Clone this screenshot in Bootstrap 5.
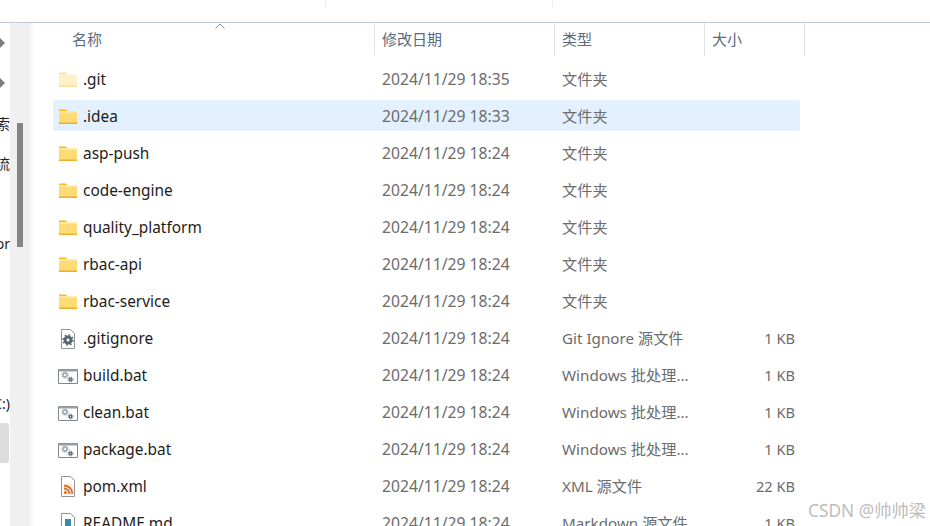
<!DOCTYPE html>
<html lang="zh-CN">
<head>
  <meta charset="UTF-8" />
  <meta name="viewport" content="width=device-width, initial-scale=1" />
  <title>文件资源管理器</title>
  <link href="https://cdn.jsdelivr.net/npm/bootstrap@5.3.3/dist/css/bootstrap.min.css" rel="stylesheet">
  <style>
    html, body { height: 526px; overflow: hidden; }
    body {
      background: #fff;
      font-family: "Noto Sans", "Noto Sans CJK SC", sans-serif;
      font-size: 15.4px;
      color: #1c1c1c;
    }
    .top-band { height: 22px; }
    .top-sep { width: 1px; height: 8px; background: #f0f0f0; }
    .top-sep-a { margin-left: 325px; }
    .top-sep-b { margin-left: 226px; }
    .shell { height: 504px; border-top: 1px solid #bccad9; overflow: hidden; }

    .side-labels { width: 10px; overflow: hidden; flex-shrink: 0; }
    .side-row { height: 40px; font-size: 14px; white-space: nowrap; color: #222; }
    .side-row.hovered { background: #dcdcdc; border-radius: 0 3px 3px 0; width: 9px; }
    .side-arrow { width: 0; height: 0; border-left: 5px solid #7c7c7c; border-top: 5px solid transparent; border-bottom: 5px solid transparent; }
    .side-track { width: 20px; background: #f0f0f0; flex-shrink: 0; padding-top: 100px; }
    .side-thumb { width: 6px; height: 124px; margin-left: 7px; background: #858585; }
    .side-edge { width: 3px; background: #f8f8f8; flex-shrink: 0; }

    .head-row, .file-row { display: grid; }
    .head-row { grid-template-columns: 342px 180px 150px 100px; height: 31px; color: #5a6a80; font-size: 15px; position: relative; }
    .head-cell { padding-left: 7px; border-right: 1px solid #e3e3e3; line-height: 33px; }
    .head-cell:first-child { padding-left: 39px; }
    .sort-caret { position: absolute; left: 181px; top: 0; }

    .file-list { width: 767px; padding: 9px 0 0 20px; display: flex; flex-direction: column; gap: 6px; }
    .file-row { grid-template-columns: 329px 180px 150px 88px; height: 31px; line-height: 32px; flex-shrink: 0; border-radius: 2px; }
    .file-row.picked { background: #e2f1fd; }
    .file-name { display: flex; align-items: center; }
    .file-name span { padding-top: 1px; }
    .file-icon { width: 30px; height: 24px; flex-shrink: 0; }
    .file-date, .file-type, .file-size { color: #6c6c6c; }
    .file-date { font-size: 15.7px; }
    .file-type { font-size: 15.2px; }
    .file-size { text-align: right; padding-right: 5px; font-size: 14.6px; line-height: 33px; }
    .mark-text {
      position: absolute; left: 808px; top: 500px;
      color: #bdbdbd; font-size: 17.3px; line-height: 22px;
      white-space: nowrap;
    }
  </style>
</head>
<body>

<svg width="0" height="0" class="d-block">
  <defs>
    <symbol id="ic-folder" viewBox="0 0 30 24">
      <path d="M6 4.500h7l2 2h-9z" fill="#f9bc1f"/>
      <path d="M6 6.500h18v12.500H6z" fill="#fedb74"/>
      <path d="M6 17.500h18V19H6z" fill="#efae2c"/>
      <path d="M6 6.500h18v1H6z" fill="#fff0b8"/>
    </symbol>
    <symbol id="ic-folder-dim" viewBox="0 0 30 24">
      <path d="M6 4.500h7l2 2h-9z" fill="#fce09a"/>
      <path d="M6 6.500h18v12.500H6z" fill="#fff0c8"/>
      <path d="M6 17.500h18V19H6z" fill="#f8dfa4"/>
    </symbol>
    <symbol id="ic-gear-file" viewBox="0 0 30 24">
      <path d="M8.500 2.500h9l4 4v15h-13z" fill="#fff" stroke="#8d9499"/>
      <circle cx="15" cy="13" r="3" fill="none" stroke="#566570" stroke-width="3"/>
      <circle cx="15" cy="13" r="5" fill="none" stroke="#566570" stroke-width="1.500" stroke-dasharray="1.800 2.100"/>
    </symbol>
    <symbol id="ic-bat" viewBox="0 0 30 24">
      <path d="M5.500 5.500h19v14h-19z" fill="#fff" stroke="#81878c"/>
      <path d="M5.500 6.500h19" stroke="#9aa0a5" stroke-width="2"/>
      <circle cx="12" cy="11" r="2" fill="none" stroke="#a6b0b8" stroke-width="1.800"/>
      <circle cx="12" cy="11" r="3.300" fill="none" stroke="#a6b0b8" stroke-width="1" stroke-dasharray="1.300 1.300"/>
      <circle cx="17.500" cy="15.500" r="1.300" fill="none" stroke="#5f6b74" stroke-width="1.500"/>
      <circle cx="17.500" cy="15.500" r="2.500" fill="none" stroke="#5f6b74" stroke-width="1" stroke-dasharray="1 1"/>
    </symbol>
    <symbol id="ic-xml" viewBox="0 0 30 24">
      <path d="M8.500 1.500h9l4 4v16h-13z" fill="#fff" stroke="#8d9499"/>
      <path d="M10.500 8.500h9v11h-9z" fill="#fbeadd"/>
      <circle cx="12.300" cy="17.500" r="1.500" fill="#d4732f"/>
      <path d="M11 13.500a5.500 5.500 0 0 1 5.500 5.500M11 10.500a8.500 8.500 0 0 1 8.500 8.500" fill="none" stroke="#d4732f" stroke-width="1.800"/>
    </symbol>
    <symbol id="ic-md" viewBox="0 0 30 24">
      <path d="M8.500 1.500h9l4 4v16h-13z" fill="#fff" stroke="#8d9499"/>
      <path d="M12 7h6v7l2 3v5h-10v-5l2-3z" fill="#3f87ad"/>
    </symbol>
  </defs>
</svg>

<div class="top-band d-flex">
  <div class="top-sep top-sep-a"></div>
  <div class="top-sep top-sep-b"></div>
</div>

<div class="shell d-flex">
  <!-- nav pane, cut off on the left -->
  <div class="side-labels">
    <div class="side-row d-flex align-items-center justify-content-start"><span class="side-arrow"></span></div>
    <div class="side-row d-flex align-items-center justify-content-start"><span class="side-arrow"></span></div>
    <div class="side-row d-flex align-items-center justify-content-end">搜索</div>
    <div class="side-row d-flex align-items-center justify-content-end">交流</div>
    <div class="side-row"></div>
    <div class="side-row d-flex align-items-center justify-content-end">or</div>
    <div class="side-row"></div>
    <div class="side-row"></div>
    <div class="side-row"></div>
    <div class="side-row d-flex align-items-center justify-content-end">C:)</div>
    <div class="side-row hovered"></div>
  </div>
  <div class="side-track"><div class="side-thumb"></div></div>
  <div class="side-edge"></div>

  <!-- file pane -->
  <div class="flex-grow-1 overflow-hidden">
    <div class="head-row">
      <div class="head-cell">名称</div>
      <div class="head-cell">修改日期</div>
      <div class="head-cell">类型</div>
      <div class="head-cell">大小</div>
      <svg class="sort-caret" width="12" height="6" viewBox="0 0 12 6"><path d="M1.500 5.500 6 1l4.500 4.500" fill="none" stroke="#8a8a8a"/></svg>
    </div>

    <div class="file-list" id="fileList"></div>
  </div>
</div>

<div class="mark-text">CSDN @帅帅梁</div>

<script src="https://cdn.jsdelivr.net/npm/bootstrap@5.3.3/dist/js/bootstrap.bundle.min.js"></script>
<script>
  const files = [
    ['ic-folder-dim', '.git', '2024/11/29 18:35', '文件夹', ''],
    ['ic-folder', '.idea', '2024/11/29 18:33', '文件夹', ''],
    ['ic-folder', 'asp-push', '2024/11/29 18:24', '文件夹', ''],
    ['ic-folder', 'code-engine', '2024/11/29 18:24', '文件夹', ''],
    ['ic-folder', 'quality_platform', '2024/11/29 18:24', '文件夹', ''],
    ['ic-folder', 'rbac-api', '2024/11/29 18:24', '文件夹', ''],
    ['ic-folder', 'rbac-service', '2024/11/29 18:24', '文件夹', ''],
    ['ic-gear-file', '.gitignore', '2024/11/29 18:24', 'Git Ignore 源文件', '1 KB'],
    ['ic-bat', 'build.bat', '2024/11/29 18:24', 'Windows 批处理...', '1 KB'],
    ['ic-bat', 'clean.bat', '2024/11/29 18:24', 'Windows 批处理...', '1 KB'],
    ['ic-bat', 'package.bat', '2024/11/29 18:24', 'Windows 批处理...', '1 KB'],
    ['ic-xml', 'pom.xml', '2024/11/29 18:24', 'XML 源文件', '22 KB'],
    ['ic-md', 'README.md', '2024/11/29 18:24', 'Markdown 源文件', '1 KB']
  ];
  document.getElementById('fileList').innerHTML = files.map((f, i) => `
    <div class="file-row${i === 1 ? ' picked' : ''}">
      <div class="file-name"><svg class="file-icon"><use href="#${f[0]}"/></svg><span>${f[1]}</span></div>
      <div class="file-date">${f[2]}</div>
      <div class="file-type">${f[3]}</div>
      <div class="file-size">${f[4]}</div>
    </div>`).join('');
</script>

</body>
</html>
